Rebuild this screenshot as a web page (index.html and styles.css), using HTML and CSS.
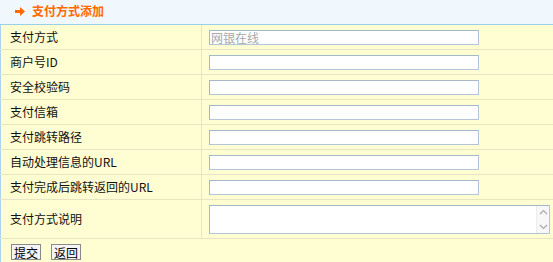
FILE: index.html
```html
<!DOCTYPE html>
<html lang="zh-CN">
<head>
<meta charset="utf-8">
<title>支付方式添加</title>
<link rel="stylesheet" href="styles.css">
</head>
<body>
<div class="page">
  <div class="header">
    <svg class="arrow" width="10" height="9" viewBox="0 0 10 9"><path d="M0 3 H5 V0 L10 4.5 L5 9 V6 H0 Z" fill="#ff6a00"/></svg>
    <span class="title">支付方式添加</span>
  </div>
  <table class="form">
    <tr><td class="label">支付方式</td><td class="field"><input class="txt muted" type="text" value="网银在线"></td></tr>
    <tr><td class="label">商户号ID</td><td class="field"><input class="txt" type="text"></td></tr>
    <tr><td class="label">安全校验码</td><td class="field"><input class="txt" type="text"></td></tr>
    <tr><td class="label">支付信箱</td><td class="field"><input class="txt" type="text"></td></tr>
    <tr><td class="label">支付跳转路径</td><td class="field"><input class="txt" type="text"></td></tr>
    <tr><td class="label">自动处理信息的URL</td><td class="field"><input class="txt" type="text"></td></tr>
    <tr><td class="label">支付完成后跳转返回的URL</td><td class="field"><input class="txt" type="text"></td></tr>
    <tr class="tall"><td class="label">支付方式说明</td><td class="field">
      <div class="area-wrap">
        <textarea class="area"></textarea>
        <div class="vscroll">
          <svg width="9" height="6" viewBox="0 0 9 6"><path d="M1 5 L4.5 1.5 L8 5" fill="none" stroke="#a9a9a9" stroke-width="1.2"/></svg>
          <svg width="9" height="6" viewBox="0 0 9 6"><path d="M1 1 L4.5 4.5 L8 1" fill="none" stroke="#a9a9a9" stroke-width="1.2"/></svg>
        </div>
      </div>
    </td></tr>
  </table>
  <div class="actions">
    <button class="btn" type="button">提交</button>
    <button class="btn" type="button">返回</button>
  </div>
</div>
</body>
</html>
```
FILE: styles.css
```css
html, body {
  margin: 0;
  padding: 0;
  background: #fffdd2;
  overflow: hidden;
}
body {
  font-family: "Noto Sans CJK SC", "Liberation Sans", sans-serif;
  font-size: 12px;
  color: #000;
}
.page {
  width: 553px;
}
.header {
  height: 24px;
  background: #f0f7fd;
  border-bottom: 1px solid #99cfea;
  display: flex;
  align-items: center;
  padding-left: 15px;
  gap: 7px;
}
.title {
  color: #ff6a00;
  font-weight: bold;
  font-size: 12px;
  line-height: 14px;
  position: relative;
  top: -1px;
}
.arrow {
  display: block;
  position: relative;
  top: -1px;
}
.form {
  width: 100%;
  border-collapse: collapse;
  border-left: 1px solid #a9d3ee;
}
.form td {
  border-bottom: 1px solid #e8e4c2;
  height: 24px;
  padding: 0;
  background: #fffdd2;
}
.form tr.tall td {
  height: 38px;
}
.label {
  width: 191px;
  padding-left: 9px !important;
  border-right: 1px solid #e8e4c2;
  line-height: 14px;
  color: #111;
}
.field {
  padding-left: 7px !important;
}
.txt {
  display: block;
  box-sizing: border-box;
  width: 270px;
  height: 15px;
  margin: 0;
  padding: 0 1px;
  border: 1px solid #b3c5d6;
  border-top-color: #a6b7c7;
  border-left-color: #a6b7c7;
  background: #fff;
  font-family: inherit;
  font-size: 12px;
  line-height: 13px;
  outline: none;
}
.muted {
  color: #a8a8a8;
}
.area-wrap {
  position: relative;
  width: 341px;
  height: 29px;
}
.area {
  display: block;
  box-sizing: border-box;
  width: 341px;
  height: 29px;
  margin: 0;
  padding: 0;
  border: 1px solid #b3c5d6;
  border-top-color: #a6b7c7;
  border-left-color: #a6b7c7;
  background: #fff;
  resize: none;
  overflow: hidden;
  font-family: inherit;
  font-size: 12px;
}
.vscroll {
  position: absolute;
  top: 1px;
  right: 1px;
  bottom: 1px;
  width: 13px;
  background: #f7f7f7;
  border-left: 1px solid #ececec;
  display: flex;
  flex-direction: column;
  justify-content: space-between;
  align-items: center;
  padding: 3px 0;
  box-sizing: border-box;
}
.vscroll svg {
  display: block;
}
.actions {
  display: flex;
  gap: 10px;
  padding: 5px 0 0 10px;
  border-left: 1px solid #a9d3ee;
  height: 19px;
}
.btn {
  box-sizing: border-box;
  width: 30px;
  height: 16px;
  margin: 0;
  padding: 0;
  border: 1px solid #8a8a8a;
  background: #f4f4f4;
  font-family: inherit;
  font-size: 12px;
  line-height: 13px;
  color: #000;
}
```
